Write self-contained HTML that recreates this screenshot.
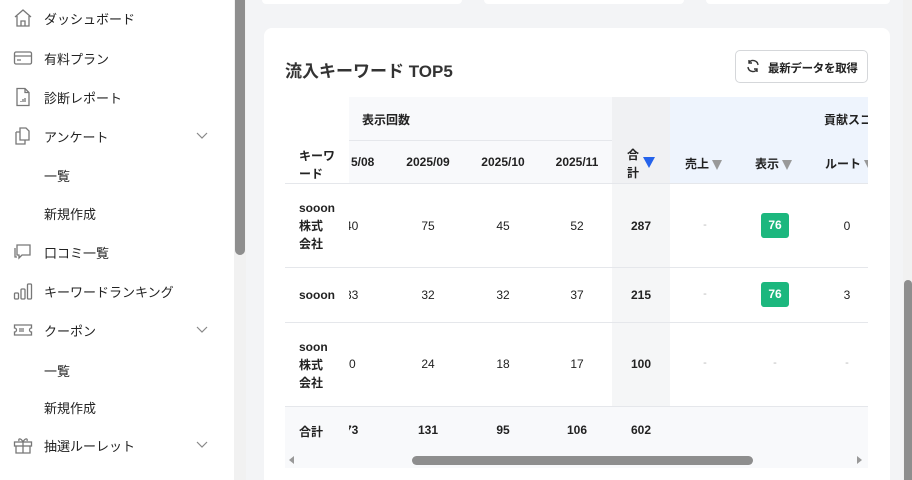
<!DOCTYPE html>
<html><head><meta charset="utf-8"><style>
*{margin:0;padding:0;box-sizing:border-box}
html{width:912px;height:480px;overflow:hidden}
body{width:912px;height:480px;overflow:hidden;background:#f3f4f6;font-family:"Liberation Sans","Noto Sans CJK JP",sans-serif;color:#222;position:relative}
.side{position:absolute;left:0;top:0;width:234px;height:480px;background:#fff}
.sb{position:absolute;left:234px;top:0;width:12px;height:480px;background:#f1f1f1}
.sb div{position:absolute;left:1px;top:0;width:10px;height:255px;background:#8e8e8e;border-radius:0 0 5px 5px}
.it{position:absolute;left:44px;font-size:13px;color:#222}
.ic{position:absolute;left:13px;width:20px;height:20px}
.chev{position:absolute;left:196px;width:12px;height:8px}
.card{position:absolute;left:264px;top:28px;width:626px;height:452px;background:#fff;border-radius:8px 8px 0 0}
.a{position:absolute;font-size:12px;white-space:nowrap}
.c{text-align:center;transform:translateX(-50%)}
.b{font-weight:bold}
.ln{position:absolute;left:285px;width:583px;height:1px;background:#e5e7eb}
.tri{display:inline-block;width:0;height:0;border-left:5px solid transparent;border-right:5px solid transparent;border-top:10px solid #999;vertical-align:middle;margin-left:3px}
.badge{position:absolute;width:28px;height:25px;background:#1cb77e;color:#fff;border-radius:3px;font-size:12px;font-weight:bold;text-align:center;line-height:25px}
.dash{color:#bbb;font-size:11px}
.clip{position:absolute;left:349px;width:30px;height:20px;overflow:hidden}
.clip span{position:absolute;left:-4px;top:0;font-size:12px;white-space:nowrap}
</style></head><body>
<div class="side">
<svg class="ic" style="top:8px" viewBox="0 0 20 20" fill="none" stroke="#777" stroke-width="1.3"><path d="M2 9L10 2l8 7M4 8v10h12V8M8 18v-5h4v5"/></svg>
<div class="it" style="top:9px">ダッシュボード</div>
<svg class="ic" style="top:48px" viewBox="0 0 20 20" fill="none" stroke="#777" stroke-width="1.3"><rect x="1.5" y="4" width="17" height="12" rx="1.5"/><path d="M1.5 8h17M4 12h4"/></svg>
<div class="it" style="top:49px">有料プラン</div>
<svg class="ic" style="top:87px" viewBox="0 0 20 20" fill="none" stroke="#777" stroke-width="1.3"><path d="M4 1.5h8l4 4v13H4z M12 1.5v4h4"/><path d="M8 15v-1M10 15v-3M12 15v-4"/></svg>
<div class="it" style="top:88px">診断レポート</div>
<svg class="ic" style="top:126px" viewBox="0 0 20 20" fill="none" stroke="#777" stroke-width="1.3"><path d="M7 2h6l3 3v9H7z M3 6h4 M3 6v12h9v-4"/></svg>
<div class="it" style="top:127px">アンケート</div>
<svg class="chev" style="top:132px" viewBox="0 0 12 8" fill="none" stroke="#888" stroke-width="1.2"><path d="M1 1l5 5 5-5"/></svg>
<div class="it" style="top:166px">一覧</div>
<div class="it" style="top:204px">新規作成</div>
<svg class="ic" style="top:242px" viewBox="0 0 20 20" fill="none" stroke="#777" stroke-width="1.3"><path d="M4 3h13v10H9l-3 3v-3H4z M2 6v9h2"/></svg>
<div class="it" style="top:243px">口コミ一覧</div>
<svg class="ic" style="top:281px" viewBox="0 0 20 20" fill="none" stroke="#777" stroke-width="1.3"><rect x="1.5" y="12" width="4" height="6" rx="1"/><rect x="8" y="8" width="4" height="10" rx="1"/><rect x="14.5" y="3" width="4" height="15" rx="1"/></svg>
<div class="it" style="top:282px">キーワードランキング</div>
<svg class="ic" style="top:320px" viewBox="0 0 20 20" fill="none" stroke="#777" stroke-width="1.3"><path d="M1.5 5h17v3a2 2 0 000 4v3h-17v-3a2 2 0 000-4z M6 9h5 M6 11h5"/></svg>
<div class="it" style="top:321px">クーポン</div>
<svg class="chev" style="top:326px" viewBox="0 0 12 8" fill="none" stroke="#888" stroke-width="1.2"><path d="M1 1l5 5 5-5"/></svg>
<div class="it" style="top:361px">一覧</div>
<div class="it" style="top:398px">新規作成</div>
<svg class="ic" style="top:435px" viewBox="0 0 20 20" fill="none" stroke="#777" stroke-width="1.3"><rect x="1.5" y="7" width="17" height="4"/><path d="M3 11v7h14v-7M10 7v11M10 7C8 3 5 3 6 6M10 7c2-4 5-4 4-1"/></svg>
<div class="it" style="top:436px">抽選ルーレット</div>
<svg class="chev" style="top:441px" viewBox="0 0 12 8" fill="none" stroke="#888" stroke-width="1.2"><path d="M1 1l5 5 5-5"/></svg>
</div>
<div class="sb"><div></div></div>
<div style="position:absolute;left:262px;top:0;width:200px;height:4px;background:#fff;border-radius:0 0 6px 6px"></div>
<div style="position:absolute;left:484px;top:0;width:200px;height:4px;background:#fff;border-radius:0 0 6px 6px"></div>
<div style="position:absolute;left:706px;top:0;width:184px;height:4px;background:#fff;border-radius:0 0 6px 6px"></div>
<div style="position:absolute;left:903px;top:0;width:9px;height:480px;background:#f1f1f1"></div>
<div style="position:absolute;left:904px;top:280px;width:8px;height:200px;background:#8e8e8e;border-radius:4px 4px 0 0"></div>
<div class="card"></div>
<div class="a" style="left:285px;top:57px;font-size:17px;font-weight:bold;color:#333">流入キーワード TOP5</div>
<div style="position:absolute;left:735px;top:50px;width:133px;height:33px;border:1px solid #d5d7da;border-radius:5px;background:#fff"></div>
<svg style="position:absolute;left:746px;top:59px" width="14" height="14" viewBox="0 0 14 14" fill="none" stroke="#333" stroke-width="1.4"><path d="M12 6A5 5 0 003 3.5M2 8a5 5 0 009 2.5"/><path d="M3 1v3h3M11 13v-3H8"/></svg>
<div class="a b" style="left:768px;top:60px;font-size:11.5px;letter-spacing:-0.3px">最新データを取得</div>
<div style="position:absolute;left:349px;top:97px;width:263px;height:86px;background:#f8f9fb"></div>
<div style="position:absolute;left:612px;top:97px;width:58px;height:355px;background:#f5f6f7"></div>
<div style="position:absolute;left:612px;top:97px;width:58px;height:86px;background:#f0f1f3"></div>
<div style="position:absolute;left:670px;top:97px;width:198px;height:86px;background:#eef4fd"></div>
<div style="position:absolute;left:285px;top:406px;width:583px;height:62px;background:#f8f9fb"></div>
<div style="position:absolute;left:349px;top:140px;width:263px;height:1px;background:#e5e7eb"></div>
<div class="ln" style="top:183px"></div>
<div class="ln" style="top:267px"></div>
<div class="ln" style="top:322px"></div>
<div class="ln" style="top:406px"></div>
<div class="a b" style="left:362px;top:111px">表示回数</div>
<div class="a b" style="left:824px;top:111px;width:44px;overflow:hidden">貢献スコア</div>
<div class="a b" style="left:299px;top:147px;line-height:18px">キーワ<br>ード</div>
<div class="a b" style="left:351px;top:155px">5/08</div>
<div class="a b c" style="left:428px;top:155px">2025/09</div>
<div class="a b c" style="left:503px;top:155px">2025/10</div>
<div class="a b c" style="left:577px;top:155px">2025/11</div>
<div class="a b" style="left:627px;top:146px;line-height:18px">合<br>計</div>
<div style="position:absolute;left:643px;top:157px;width:0;height:0;border-left:6px solid transparent;border-right:6px solid transparent;border-top:11px solid #2563eb"></div>
<div class="a b" style="left:685px;top:155px">売上<span class="tri"></span></div>
<div class="a b" style="left:755px;top:155px">表示<span class="tri"></span></div>
<div class="a b" style="left:825px;top:155px;width:43px;overflow:hidden">ルート<span class="tri"></span></div>
<div class="a b" style="left:299px;top:199px;line-height:18px">sooon<br>株式<br>会社</div>
<div class="clip" style="top:219px"><span>40</span></div>
<div class="a c" style="left:428px;top:219px">75</div>
<div class="a c" style="left:503px;top:219px">45</div>
<div class="a c" style="left:577px;top:219px">52</div>
<div class="a b c" style="left:641px;top:219px">287</div>
<div class="a c dash" style="left:705px;top:219px">-</div>
<div class="badge" style="left:761px;top:213px">76</div>
<div class="a c" style="left:847px;top:219px">0</div>
<div class="a b" style="left:299px;top:288px">sooon</div>
<div class="clip" style="top:288px"><span>33</span></div>
<div class="a c" style="left:428px;top:288px">32</div>
<div class="a c" style="left:503px;top:288px">32</div>
<div class="a c" style="left:577px;top:288px">37</div>
<div class="a b c" style="left:641px;top:288px">215</div>
<div class="a c dash" style="left:705px;top:288px">-</div>
<div class="badge" style="left:761px;top:282px">76</div>
<div class="a c" style="left:847px;top:288px">3</div>
<div class="a b" style="left:299px;top:338px;line-height:18px">soon<br>株式<br>会社</div>
<div class="a" style="left:349px;top:357px">0</div>
<div class="a c" style="left:428px;top:357px">24</div>
<div class="a c" style="left:503px;top:357px">18</div>
<div class="a c" style="left:577px;top:357px">17</div>
<div class="a b c" style="left:641px;top:357px">100</div>
<div class="a c dash" style="left:705px;top:357px">-</div>
<div class="a c dash" style="left:775px;top:357px">-</div>
<div class="a c dash" style="left:847px;top:357px">-</div>
<div class="a b" style="left:299px;top:423px">合計</div>
<div class="clip" style="top:423px"><span class="b">73</span></div>
<div class="a b c" style="left:428px;top:423px">131</div>
<div class="a b c" style="left:503px;top:423px">95</div>
<div class="a b c" style="left:577px;top:423px">106</div>
<div class="a b c" style="left:641px;top:423px">602</div>
<div style="position:absolute;left:412px;top:456px;width:341px;height:9px;background:#8e8e8e;border-radius:5px"></div>
<div style="position:absolute;left:289px;top:456px;width:0;height:0;border-top:4px solid transparent;border-bottom:4px solid transparent;border-right:5px solid #999"></div>
<div style="position:absolute;left:857px;top:456px;width:0;height:0;border-top:4px solid transparent;border-bottom:4px solid transparent;border-left:5px solid #999"></div>
</body></html>
